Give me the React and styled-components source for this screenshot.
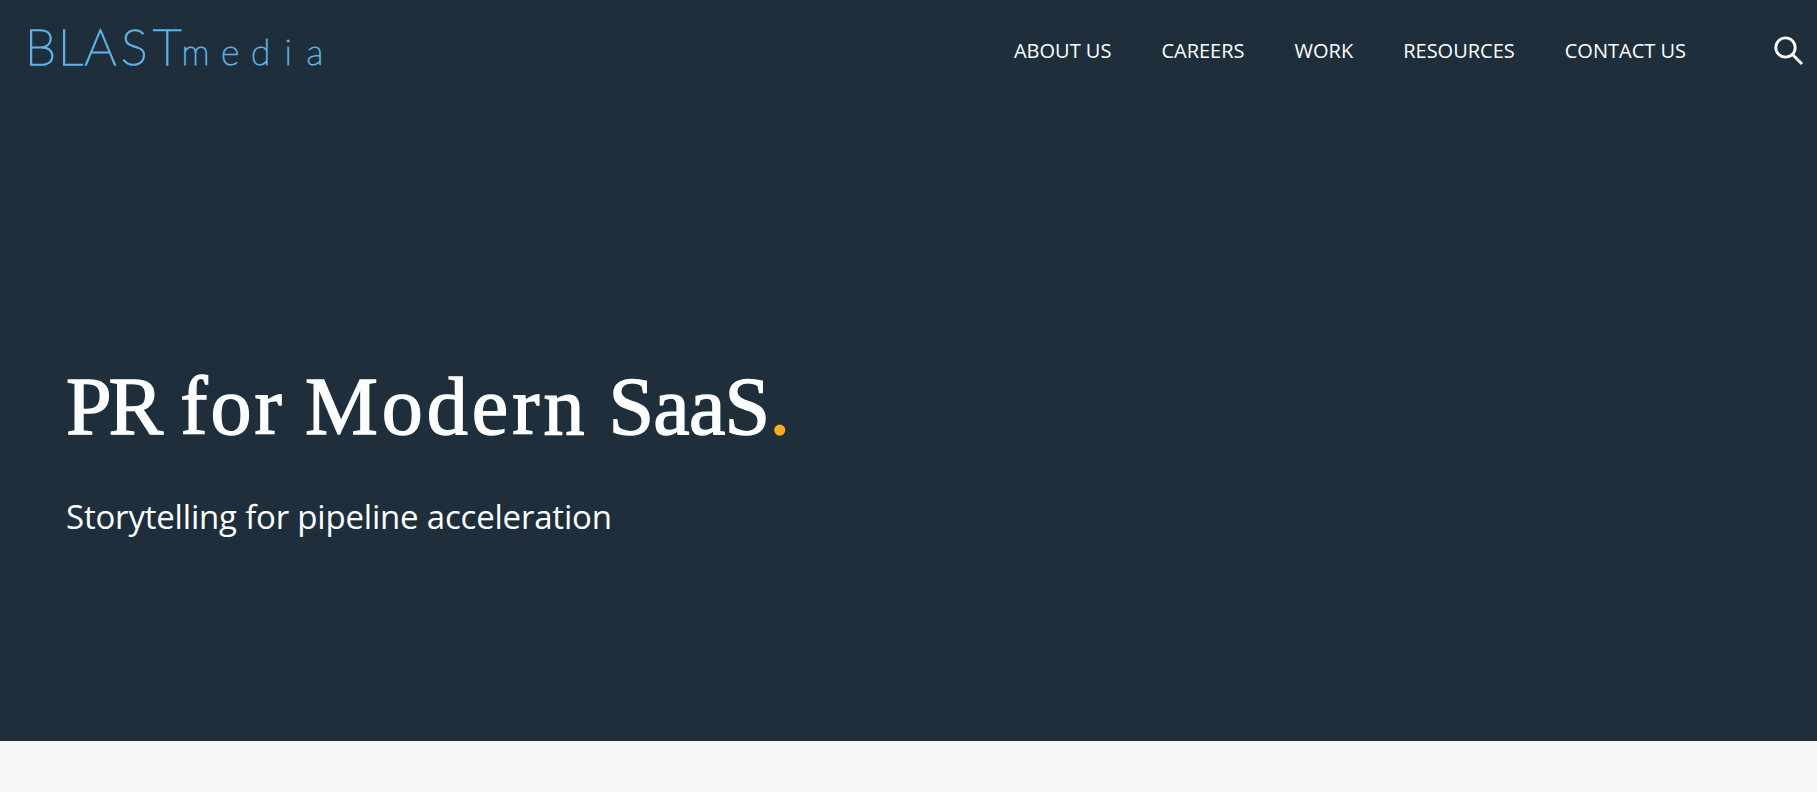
import styled, {createGlobalStyle} from "styled-components";

const GlobalStyle = createGlobalStyle`
  body {
    margin: 0;
    background: #f8f8f8;
    overflow: hidden;
  }
`;

const Page = styled.div`
  display: flex;
  flex-direction: column;
  height: 792px;
  font-family: "Open Sans", sans-serif;
  color: #fff;
`;

const Banner = styled.div`
  display: flex;
  flex-direction: column;
  height: 741px;
  background: #1e2f3b;
`;

const Header = styled.header`
  display: flex;
  align-items: center;
  height: 102px;
  padding: 0 13px 0 20px;
`;

const Logo = styled.svg`
  width: 320px;
  height: 102px;
  fill: #5eb3e6;
  stroke: #5eb3e6;
  font-family: Lato, sans-serif;
  font-weight: 100;
`;

const Nav = styled.nav`
  display: flex;
  gap: 50px;
  margin-left: auto;
`;

const NavLink = styled.a`
  font-size: 20px;
  line-height: 28px;
  text-transform: uppercase;
  white-space: nowrap;
`;

const SearchButton = styled.a`
  display: flex;
  margin-left: 88px;
`;

const Hero = styled.section`
  padding: 259px 66px 0;
`;

const Title = styled.h1`
  display: flex;
  gap: 20px;
  margin: 0;
  font: 400 82px/92px "Liberation Serif", serif;
  -webkit-text-stroke: 1.4px currentColor;
`;

const Word = styled.span`
  letter-spacing: ${(props) => props.$spacing || 0}px;
`;

const Dot = styled.span`
  color: #fbad1d;
`;

const Subtitle = styled.p`
  margin: 41px 0 0;
  font-size: 33px;
  line-height: 46px;
  letter-spacing: -0.2px;
`;

const links = ["About us", "Careers", "Work", "Resources", "Contact us"];

const App = () => {
	return (<Page>
		<GlobalStyle/>
		<Banner>
			<Header>
				<Logo viewBox="0 0 320 102">
					<text x="5 38 64.5 101 133" y="65" fontSize="50" strokeWidth="1.6">BLAST</text>
					<text x="161.5 201 231 264.5 286.5" y="65" fontSize="35.5" strokeWidth="1.1">media</text>
				</Logo>
				<Nav>
					{links.map((link) => <NavLink key={link}>{link}</NavLink>)}
				</Nav>
				<SearchButton>
					<svg width="30" height="30" viewBox="0 0 30 30" fill="none" stroke="#fff">
						<circle cx="11.5" cy="11.5" r="9.7" strokeWidth="2.8"/>
						<path d="M18.5 18.5L28 28" strokeWidth="3"/>
					</svg>
				</SearchButton>
			</Header>
			<Hero>
				<Title>
					<Word $spacing={-3}>PR</Word>
					<Word $spacing={3}>for</Word>
					<Word $spacing={4}>Modern</Word>
					<Word $spacing={-0.8}>SaaS<Dot>.</Dot></Word>
				</Title>
				<Subtitle>Storytelling for pipeline acceleration</Subtitle>
			</Hero>
		</Banner>
	</Page>);
};
export default App;
